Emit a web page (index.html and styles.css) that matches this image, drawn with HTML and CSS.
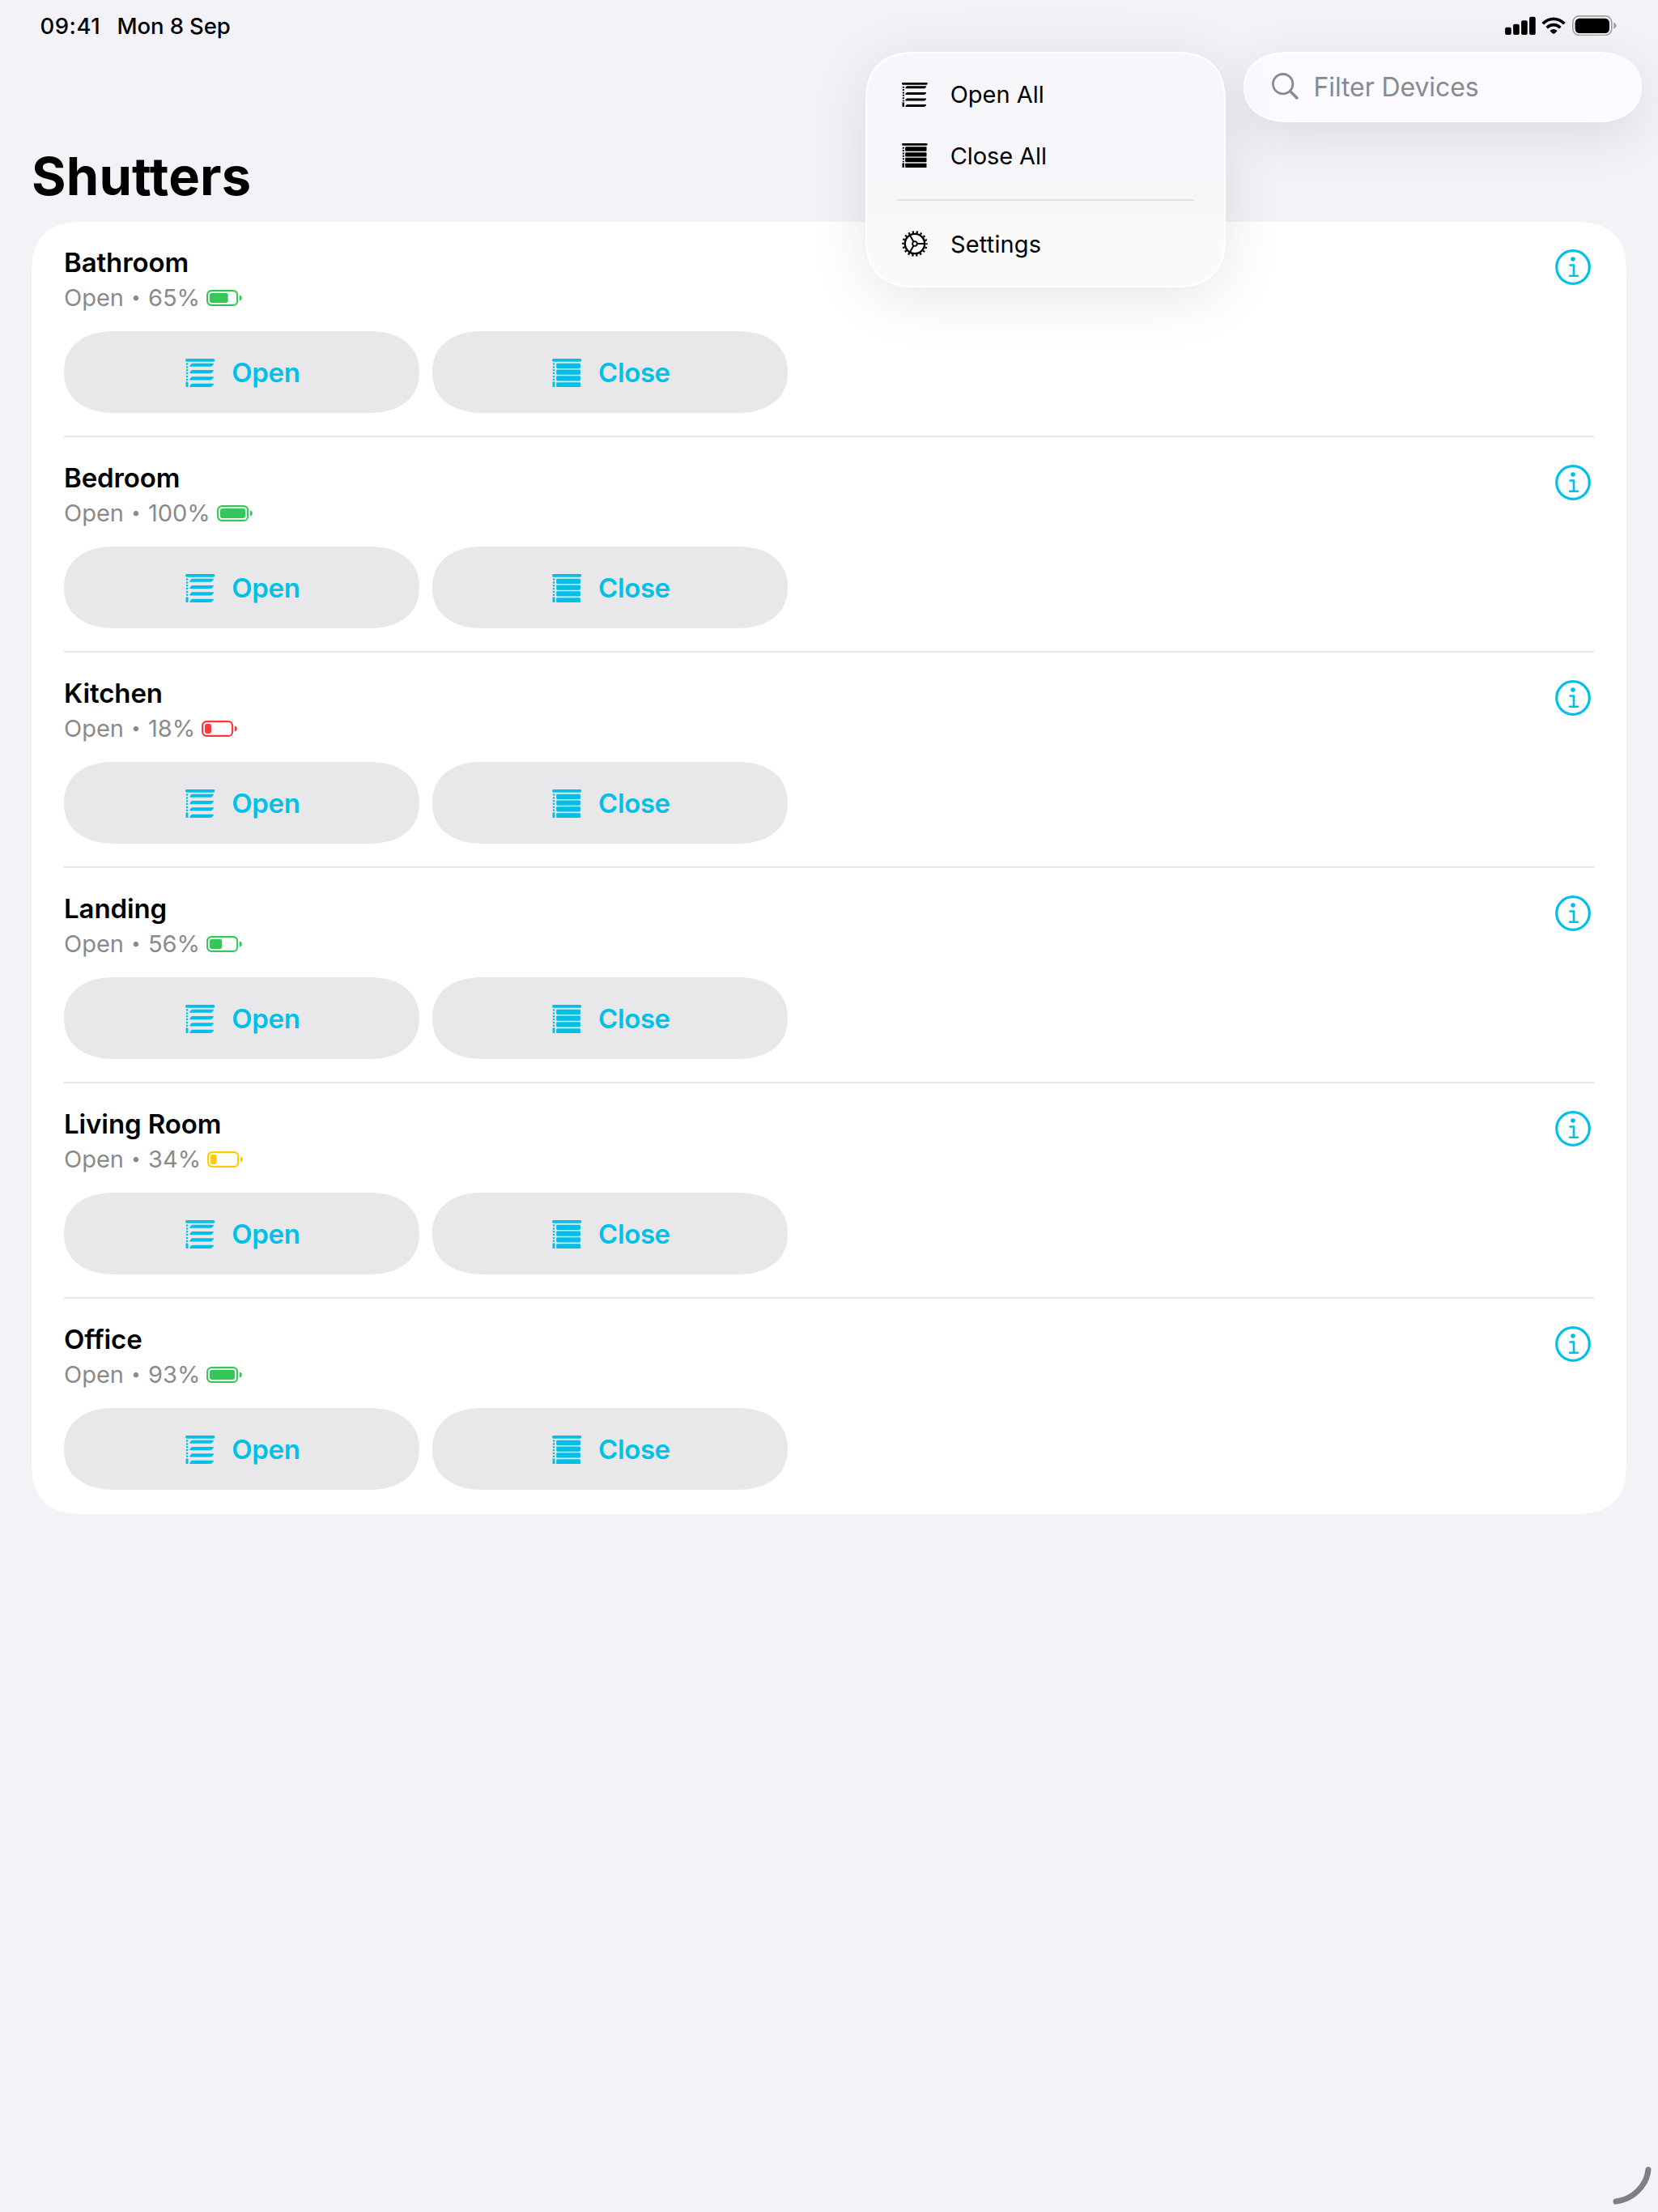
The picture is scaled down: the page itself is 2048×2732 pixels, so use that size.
FILE: index.html
```html
<!DOCTYPE html>
<html lang="en">
<head>
<meta charset="utf-8">
<title>Shutters</title>
<link rel="stylesheet" href="styles.css">
</head>
<body>
<svg class="sprite" aria-hidden="true">
  <symbol id="blind-open" viewBox="0 0 109 106">
    <rect width="109" height="11" rx="5"/>
    <g><rect x="2.500" y="16" width="7.500" height="7.500" rx="3"/><rect x="2.500" y="27.500" width="7.500" height="7.500" rx="3"/><rect x="2.500" y="39" width="7.500" height="7.500" rx="3"/><rect x="2.500" y="50.500" width="7.500" height="7.500" rx="3"/><rect x="2.500" y="62" width="7.500" height="7.500" rx="3"/><rect x="2.500" y="73.500" width="7.500" height="7.500" rx="3"/></g>
    <rect x="1.500" y="85" width="9" height="21" rx="4"/>
    <path id="slat" d="M27 17H102Q107 17 104 21L100 26Q97 29.500 93 29.500H19Q14 29.500 17 25L20 20.500Q23 17 27 17Z"/>
    <use href="#slat" y="25"/><use href="#slat" y="50"/><use href="#slat" y="75.500"/>
  </symbol>
  <symbol id="blind-closed" viewBox="0 0 109 106">
    <rect width="109" height="11" rx="5"/>
    <g><rect x="2.500" y="16" width="7.500" height="7.500" rx="3"/><rect x="2.500" y="27.500" width="7.500" height="7.500" rx="3"/><rect x="2.500" y="39" width="7.500" height="7.500" rx="3"/><rect x="2.500" y="50.500" width="7.500" height="7.500" rx="3"/><rect x="2.500" y="62" width="7.500" height="7.500" rx="3"/><rect x="2.500" y="73.500" width="7.500" height="7.500" rx="3"/></g>
    <rect x="1.500" y="85" width="9" height="21" rx="4"/>
    <rect x="15.500" y="17.500" width="89.500" height="18.500" rx="3.500"/><rect x="15.500" y="40.500" width="89.500" height="18.500" rx="3.500"/><rect x="15.500" y="64" width="89.500" height="18.500" rx="3.500"/><rect x="15.500" y="87.500" width="89.500" height="18.500" rx="3.500"/>
  </symbol>
  <symbol id="info" viewBox="0 0 44 44">
    <circle cx="22" cy="22" r="20.300" fill="none" stroke="currentColor" stroke-width="3.200"/>
    <circle cx="22" cy="12" r="2.800"/>
    <path d="M18.500 19.500H23V32.800M18 32.800H28" fill="none" stroke="currentColor" stroke-width="2.600" stroke-linecap="round" stroke-linejoin="round"/>
  </symbol>
  <symbol id="battery" viewBox="0 0 44 20">
    <rect x="1.100" y="1.100" width="37" height="17.800" rx="5" fill="none" stroke="currentColor" stroke-width="2.100"/>
    <path d="M40.800 6.500Q43.800 7.200 43.800 10T40.800 13.500Z"/>
  </symbol>
</svg>

<div class="status">
  <span class="time">09:41</span><span class="date">Mon 8 Sep</span>
  <svg class="indicators" viewBox="118 57 413 76">
    <rect x="118" y="101" width="23" height="28" rx="6"/><rect x="148" y="89" width="23" height="40" rx="6"/><rect x="178" y="76" width="23" height="53" rx="6"/><rect x="208" y="62" width="23" height="67" rx="6"/>
    <g fill="none" stroke="#000" stroke-width="11"><path d="M258 88Q275 70 298 70T338 88"/><path d="M273 103Q284 92 298 92T323 103"/></g>
    <path d="M298 108Q306 108 312 114L303 123Q298 127 293 123L284 114Q290 108 298 108Z"/>
    <rect x="369.500" y="59.500" width="144" height="71" rx="23" fill="none" stroke="#a2a2a5" stroke-width="5"/>
    <rect x="378" y="68" width="127" height="55" rx="16"/>
    <path d="M521 83Q531 87 531 95T521 107Z" fill="#a2a2a5"/>
  </svg>
</div>

<header class="toolbar">
  <nav class="menu">
    <a class="item"><svg class="glyph" viewBox="0 0 95 90"><rect width="95" height="8" rx="3.500"/><path d="M5.500 14V70" stroke="#000" stroke-width="6" stroke-dasharray="6 4.200" fill="none"/><rect x="1.500" y="73" width="7.500" height="17" rx="3"/><path id="thin" d="M20 13H88Q92 13 90 16L87 20Q85 22 82 22H15Q11 22 13 19L16 15Q18 13 20 13Z"/><use href="#thin" y="23"/><use href="#thin" y="45.500"/><use href="#thin" y="68"/></svg>Open All</a>
    <a class="item close-all"><svg class="glyph" viewBox="0 0 95 90"><rect width="95" height="8" rx="3.500"/><path d="M5.500 14V70" stroke="#000" stroke-width="6" stroke-dasharray="6 4.200" fill="none"/><rect x="1.500" y="73" width="7.500" height="17" rx="3"/><rect x="12.500" y="13" width="79" height="16.500" rx="2.500"/><rect x="12.500" y="33.500" width="79" height="16" rx="2.500"/><rect x="12.500" y="53.500" width="79" height="16.500" rx="2.500"/><rect x="12.500" y="74" width="79" height="16" rx="2.500"/></svg>Close All</a>
    <hr>
    <a class="item settings"><svg class="glyph gear" viewBox="0 0 96 96"><g fill="none" stroke="#000"><circle cx="48" cy="48" r="36.500" stroke-width="7"/><circle cx="48" cy="48" r="43.500" stroke-width="7.500" pathLength="180" stroke-dasharray="4.500 5.500" stroke-dashoffset="2.200"/><circle cx="48" cy="48" r="8.500" stroke-width="5.500"/><path d="M58 48H84M43 39.400L30 17M43 56.600L30 79" stroke-width="6"/></g></svg>Settings</a>
  </nav>
  <div class="search"><svg class="lens" viewBox="0 0 33 33"><g fill="none" stroke="#8a898e" stroke-linecap="round"><circle cx="13.700" cy="13.700" r="12.200" stroke-width="2.800"/><path d="M22.700 22.700L31 31" stroke-width="3.400"/></g></svg>Filter Devices</div>
</header>

<h1>Shutters</h1>
<main class="card" id="devices"></main>

<svg class="corner" viewBox="96 78 144 140"><path d="M108 207C170 200 222 150 228 89" fill="none" stroke="#808080" stroke-width="21" stroke-linecap="round"/></svg>
<script src="devices.js"></script>
</body>
</html>
```
FILE: styles.css
```css
* { box-sizing: border-box; }
body {
  margin: 0;
  width: 2048px;
  height: 2732px;
  position: relative;
  overflow: hidden;
  background: #f2f2f7;
  color: #000;
  font-family: Inter, "Liberation Sans", sans-serif;
  font-synthesis: none;
}
svg { display: block; flex: none; fill: currentColor; }
.sprite { position: absolute; width: 0; height: 0; }

.status {
  height: 64px;
  padding: 0 51px 0 49.500px;
  display: flex;
  font-size: 27.500px;
  font-weight: 500;
  line-height: 64px;
}
.time { width: 95px; letter-spacing: .5px; }
.date { letter-spacing: -.1px; }
.indicators { width: 137.700px; height: 25.300px; margin: 19px 0 0 auto; }

.toolbar {
  position: relative;
  z-index: 1;
  display: flex;
  justify-content: flex-end;
  padding-right: 20px;
  height: 114px;
}
.search {
  width: 492px;
  height: 87px;
  display: flex;
  align-items: center;
  gap: 18.500px;
  padding: 0 0 1px 33px;
  border: 2px solid #fff;
  border-radius: 56px / 43.500px;
  corner-shape: superellipse(1.17);
  background: #fafaff;
  box-shadow: 0 16px 64px rgba(0, 0, 0, .1);
  color: #8a898e;
  font-size: 32px;
  letter-spacing: -.1px;
}
.lens { width: 33px; height: 33px; margin-top: -1px; }

.menu {
  position: absolute;
  top: 0;
  left: 1069px;
  width: 444.500px;
  height: 291px;
  padding: 13px 37px 0;
  border: 2px solid #fff;
  border-radius: 66px;
  corner-shape: superellipse(1.4);
  background: linear-gradient(#f6f6fb 25%, #f7f7fa 65%, #fafafa 80%);
  box-shadow: 0 12px 72px rgba(0, 0, 0, .1);
}
.item {
  height: 75.500px;
  display: flex;
  align-items: center;
  gap: 28px;
  padding-left: 6px;
  font-size: 29px;
}
.close-all { letter-spacing: -.1px; }
.settings { letter-spacing: .15px; padding-top: 1px; }
.glyph { width: 31.700px; height: 30px; }
.gear { width: 32px; height: 32px; }
.menu hr { height: 2px; margin: 15.500px 0; border: 0; background: #e2e2e5; }

h1 {
  margin: 0 0 16px 39px;
  font-size: 65px;
  line-height: 80px;
  font-weight: 700;
  letter-spacing: .2px;
  font-variant-ligatures: none;
}

.card {
  margin: 0 39px;
  padding: 0 40px;
  background: #fff;
  border-radius: 66px;
  corner-shape: superellipse(1.4);
}
.row { height: 266px; padding-top: 30px; border-bottom: 2px solid #e7e7e8; }
.row:last-child { border-bottom-color: transparent; }
.head { display: flex; justify-content: space-between; height: 83px; }
h2 { margin: 0 0 4px; font-size: 33px; line-height: 40px; font-weight: 600; letter-spacing: -.1px; }
.state {
  display: flex;
  align-items: center;
  font-size: 29px;
  line-height: 40px;
  color: #8a8a8e;
}
.dot { width: 30px; font-size: 20px; text-align: center; position: relative; top: -1px; }
.level { margin: -1px 0 0 8px; width: 44px; height: 20px; }
.level.good { color: #34c759; }
.level.mid { color: #fc0; }
.level.low { color: #ff383c; }
.info { width: 44px; height: 44px; margin: 4px 4px 0 0; color: #00c0e8; }

.actions { display: flex; gap: 16px; margin-top: 22px; }
.btn {
  width: 439px;
  height: 101px;
  display: flex;
  align-items: center;
  justify-content: center;
  gap: 21px;
  padding-left: 2.500px;
  border-radius: 62px / 50.500px;
  corner-shape: superellipse(1.17);
  background: #e8e8ea;
  color: #00c0e8;
  font-size: 33px;
  font-weight: 600;
  letter-spacing: -.4px;
}
.blind { width: 36.300px; height: 35.300px; margin-top: 2px; }

.corner {
  position: absolute;
  left: 1992px;
  top: 2676px;
  width: 48px;
  height: 46.700px;
}
```
FILE: devices.js
```js
const devices = [
  ["Bathroom", 65, "good", 22.7],
  ["Bedroom", 100, "good", 31],
  ["Kitchen", 18, "low", 8],
  ["Landing", 56, "good", 15.3],
  ["Living Room", 34, "mid", 7.6],
  ["Office", 93, "good", 31]
];
const button = (icon, label) =>
  `<div class="btn"><svg class="blind"><use href="#${icon}"/></svg>${label}</div>`;
document.getElementById("devices").innerHTML = devices.map(([name, pct, tone, fill]) => `
  <section class="row">
    <div class="head">
      <div>
        <h2>${name}</h2>
        <div class="state">Open<span class="dot">•</span>${pct}%<svg class="level ${tone}" viewBox="0 0 44 20"><use href="#battery"/><rect x="4" y="4" width="${fill}" height="12" rx="2.4"/></svg></div>
      </div>
      <svg class="info"><use href="#info"/></svg>
    </div>
    <div class="actions">${button("blind-open", "Open")}${button("blind-closed", "Close")}</div>
  </section>`).join("");
```
